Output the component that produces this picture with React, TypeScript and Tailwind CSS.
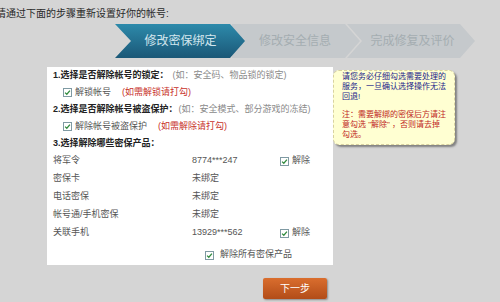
const Check = () => (
  <span className="inline-flex h-[9px] w-[9px] shrink-0 items-center justify-center border border-[#7f9aa3] bg-white">
    <svg viewBox="0 0 8 8" className="h-[7px] w-[7px]">
      <path d="M1.2 4.1 L3.2 6 L6.8 1.8" fill="none" stroke="#2f8a3c" strokeWidth="1.4" />
    </svg>
  </span>
);

const products = [
  { name: "将军令", value: "8774***247", bound: true },
  { name: "密保卡", value: "未绑定", bound: false },
  { name: "电话密保", value: "未绑定", bound: false },
  { name: "帐号通/手机密保", value: "未绑定", bound: false },
  { name: "关联手机", value: "13929***562", bound: true },
];

const App = () => {
  return (
    <div className="h-[302px] w-[500px] overflow-hidden bg-[#d5d5d5] font-['Liberation_Sans','Noto_Sans_CJK_SC',sans-serif]">
      <div className="h-[24px] pt-[7px] ml-[-4px] text-[10px] leading-[14px] text-[#2a2a2a] whitespace-nowrap">
        请通过下面的步骤重新设置好你的帐号:
      </div>

      <div className="ml-[115px] flex h-[34px]">
        <div className="relative z-10 flex w-[130px] shrink-0 items-center pl-[16px] pr-[15px] justify-center bg-gradient-to-b from-[#2d8aab] to-[#1b5877] text-[12px] text-[#d2e6ee] [clip-path:polygon(0_0,115px_0,130px_17px,115px_34px,0_34px,16px_17px)]">
          修改密保绑定
        </div>
        <div className="ml-[-13px] flex w-[128px] shrink-0 items-center justify-center pl-[13px] pr-[15px] bg-[#c5c9cc] text-[12px] text-[#a4adb1] [clip-path:polygon(0_0,113px_0,128px_17px,113px_34px,0_34px)]">
          修改安全信息
        </div>
        <div className="ml-[-13px] flex w-[128px] shrink-0 items-center justify-center pl-[18px] pr-[15px] bg-[#c5c9cc] text-[12px] text-[#a4adb1] [clip-path:polygon(0_0,113px_0,128px_17px,113px_34px,0_34px,15px_17px)]">
          完成修复及评价
        </div>
      </div>

      <div className="ml-[47px] mt-[9px] flex items-start">
        <div className="w-[286px] bg-white pl-[6px] pb-[1px] text-[9px] text-[#555]">
          <div className="flex h-[17px] items-center whitespace-nowrap">
            <span className="font-bold text-[#222]">1.选择是否解除帐号的锁定：</span>
            <span className="ml-[4px] text-[#8a8a8a]">(如：安全码、物品锁的锁定)</span>
          </div>
          <div className="ml-[10px] flex h-[17px] items-center whitespace-nowrap">
            <Check />
            <span className="ml-[3px]">解锁帐号</span>
            <span className="ml-[11px] text-[#c8322a]">(如需解锁请打勾)</span>
          </div>
          <div className="flex h-[17px] items-center whitespace-nowrap">
            <span className="font-bold text-[#222]">2.选择是否解除帐号被盗保护：</span>
            <span className="ml-[1px] text-[#8a8a8a]">(如：安全模式、部分游戏的冻结)</span>
          </div>
          <div className="ml-[10px] flex h-[17px] items-center whitespace-nowrap">
            <Check />
            <span className="ml-[3px]">解除帐号被盗保护</span>
            <span className="ml-[11px] text-[#c8322a]">(如需解除请打勾)</span>
          </div>
          <div className="flex h-[17px] items-center whitespace-nowrap">
            <span className="font-bold text-[#222]">3.选择解除哪些密保产品：</span>
          </div>
          {products.map((p) => (
            <div key={p.name} className="flex h-[18px] items-center whitespace-nowrap">
              <span className="w-[139px]">{p.name}</span>
              <span className="w-[88px]">{p.value}</span>
              {p.bound && (
                <span className="flex items-center">
                  <Check />
                  <span className="ml-[3px]">解除</span>
                </span>
              )}
            </div>
          ))}
          <div className="mt-[4px] flex h-[18px] items-center pl-[152px] whitespace-nowrap">
            <Check />
            <span className="ml-[6px]">解除所有密保产品</span>
          </div>
        </div>

        <div className="mt-[3px] w-[122px] rounded-[6px] border border-dashed border-[#d8d2a0] bg-[#ffffd2] pl-[8px] pt-[1px] pb-[4px] text-[8px] leading-[10px] whitespace-nowrap shadow-[2px_2px_2px_rgba(60,60,60,0.55)]">
          <div className="text-[#23238a]">
            请您务必仔细勾选需要处理的<br />
            服务，一旦确认选择操作无法<br />
            回退!
          </div>
          <div className="mt-[8px] text-[#c0261d]">
            注：需要解绑的密保后方请注<br />
            意勾选 "解除" ，否则请去掉<br />
            勾选。
          </div>
        </div>
      </div>

      <div className="ml-[263px] mt-[13px] flex h-[21px] w-[64px] items-center justify-center rounded-[2px] bg-gradient-to-b from-[#da6e2e] to-[#b24c18] text-[10px] text-white shadow-[1px_1px_2px_rgba(0,0,0,0.35)]">
        下一步
      </div>
    </div>
  );
};

export default App;
